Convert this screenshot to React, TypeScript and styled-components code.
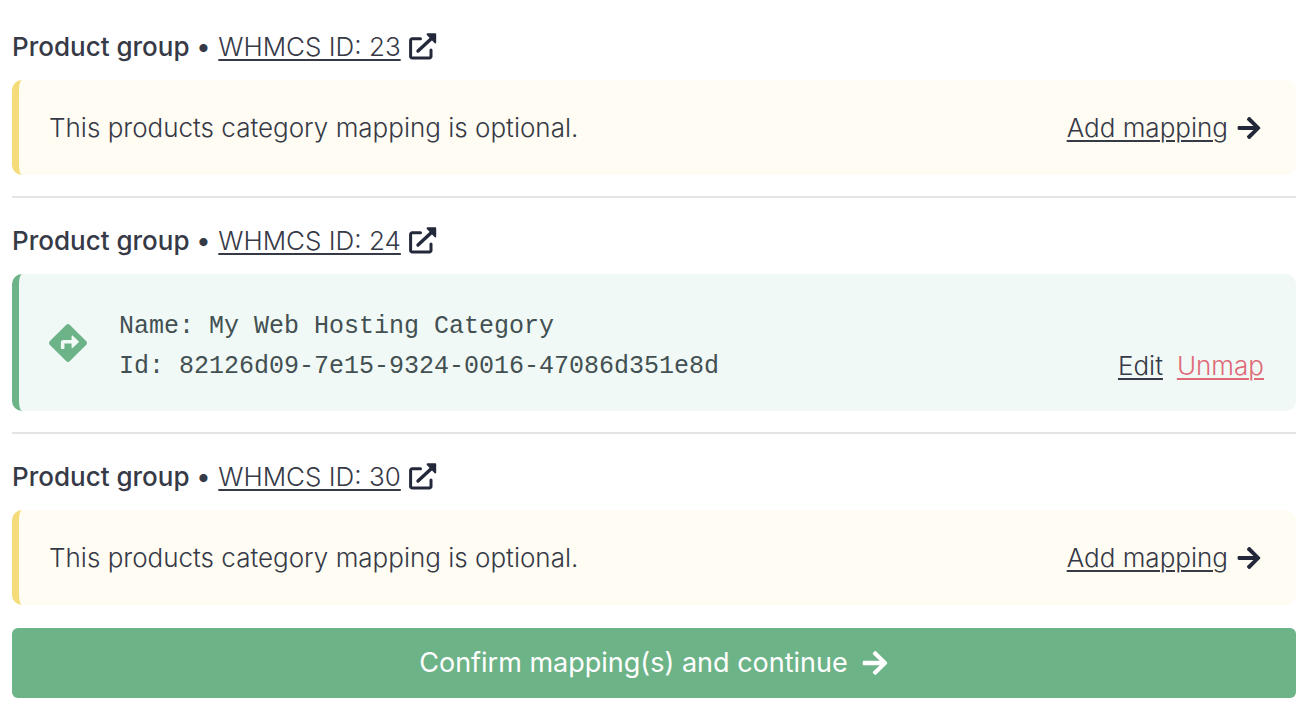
import React from "react";
import styled, { createGlobalStyle, css } from "styled-components";
import { FaArrowRight, FaDirections } from "react-icons/fa";

const GlobalStyle = createGlobalStyle`
  *, *::before, *::after { box-sizing: border-box; }
  body {
    margin: 0;
    background: #ffffff;
    color: #363946;
    font-family: Inter, "Liberation Sans", sans-serif;
    font-size: 26px;
    line-height: 35px;
  }
`;

const Page = styled.form`
  padding: 29px 18px 28px 12px;
`;

const Group = styled.section`
  & + & {
    margin-top: 21px;
    padding-top: 25px;
    border-top: 2px solid #e4e4e6;
  }
`;

const GroupHeader = styled.header`
  display: flex;
  align-items: center;
  gap: 8px;
  margin-bottom: 16px;
`;

const GroupTitle = styled.h2`
  margin: 0;
  font-size: 26px;
  font-weight: 500;
`;

const Link = styled.a<{ $danger?: boolean }>`
  color: ${(p) => (p.$danger ? "#df6a76" : "inherit")};
  font-weight: 300;
  text-decoration: underline;
  text-decoration-thickness: 2px;
  text-underline-offset: 3px;
`;

const IconLink = styled.a`
  display: flex;
  align-items: center;
  color: #23283a;
`;

const tones = {
  warning: css`
    padding: 30px 34px 30px 30px;
    background: #fffcf3;
    border-left-color: #f5dc7b;
  `,
  success: css`
    padding: 24px 32px 24px 30px;
    background: #f0f9f6;
    border-left-color: #6db388;
  `,
};

const Notice = styled.div<{ $tone: keyof typeof tones }>`
  display: flex;
  align-items: center;
  justify-content: space-between;
  border-left: 7px solid;
  border-radius: 10px;
  ${(p) => tones[p.$tone]}
`;

const Message = styled.p`
  margin: 0;
  font-weight: 300;
`;

const Actions = styled.div`
  display: flex;
  align-items: center;
  align-self: flex-end;
  gap: 14px;
  padding-bottom: 4px;
`;

const AddAction = styled.div`
  display: flex;
  align-items: center;
  gap: 8px;

  svg {
    color: #23283a;
  }
`;

const Mapping = styled.div`
  display: flex;
  align-items: center;
  gap: 32px;
  color: #6db388;
`;

const Details = styled.div`
  padding-top: 9px;
  color: #435052;
  font-family: "Liberation Mono", monospace;
  font-size: 25px;
  line-height: 40px;
`;

const ConfirmButton = styled.button`
  display: flex;
  align-items: center;
  justify-content: center;
  gap: 13px;
  width: 100%;
  margin-top: 23px;
  padding: 17px;
  border: 0;
  border-radius: 6px;
  background: #6db388;
  color: #ffffff;
  font-family: inherit;
  font-size: 27px;
  line-height: 36px;
  cursor: pointer;
`;

type MappedCategory = { name: string; id: string };
type ProductGroup = { whmcsId: number; category?: MappedCategory };

const groups: ProductGroup[] = [
  { whmcsId: 23 },
  {
    whmcsId: 24,
    category: {
      name: "My Web Hosting Category",
      id: "82126d09-7e15-9324-0016-47086d351e8d",
    },
  },
  { whmcsId: 30 },
];

function ExternalIcon() {
  return (
    <svg width="28" height="30" viewBox="0 0 28 30" fill="none" aria-hidden>
      <path
        d="M11.5 6.8H3.2a1.6 1.6 0 0 0-1.6 1.6v16a1.6 1.6 0 0 0 1.6 1.6h17.2a1.6 1.6 0 0 0 1.6-1.6v-6.4"
        stroke="currentColor"
        strokeWidth="3"
        strokeLinecap="round"
      />
      <path d="M9 19 23 6" stroke="currentColor" strokeWidth="3.4" strokeLinecap="round" />
      <path
        d="M18.6 2.2h7.6v8.2z"
        fill="currentColor"
        stroke="currentColor"
        strokeWidth="2"
        strokeLinejoin="round"
      />
    </svg>
  );
}

function OptionalNotice() {
  return (
    <Notice $tone="warning">
      <Message>This products category mapping is optional.</Message>
      <AddAction>
        <Link href="#add">Add mapping</Link>
        <FaArrowRight size={26} aria-hidden />
      </AddAction>
    </Notice>
  );
}

function MappedNotice({ category }: { category: MappedCategory }) {
  return (
    <Notice $tone="success">
      <Mapping>
        <FaDirections size={38} aria-hidden />
        <Details>
          <div>Name: {category.name}</div>
          <div>Id: {category.id}</div>
        </Details>
      </Mapping>
      <Actions>
        <Link href="#edit">Edit</Link>
        <Link href="#unmap" $danger>
          Unmap
        </Link>
      </Actions>
    </Notice>
  );
}

export default function App() {
  return (
    <>
      <GlobalStyle />
      <Page onSubmit={(e) => e.preventDefault()}>
        {groups.map(({ whmcsId, category }) => (
          <Group key={whmcsId}>
            <GroupHeader>
              <GroupTitle>Product group •</GroupTitle>
              <Link href={`#group-${whmcsId}`}>WHMCS ID: {whmcsId}</Link>
              <IconLink
                href={`#group-${whmcsId}`}
                aria-label={`Open group ${whmcsId} in WHMCS`}
              >
                <ExternalIcon />
              </IconLink>
            </GroupHeader>
            {category ? <MappedNotice category={category} /> : <OptionalNotice />}
          </Group>
        ))}
        <ConfirmButton type="submit">
          Confirm mapping(s) and continue
          <FaArrowRight size={28} aria-hidden />
        </ConfirmButton>
      </Page>
    </>
  );
}
